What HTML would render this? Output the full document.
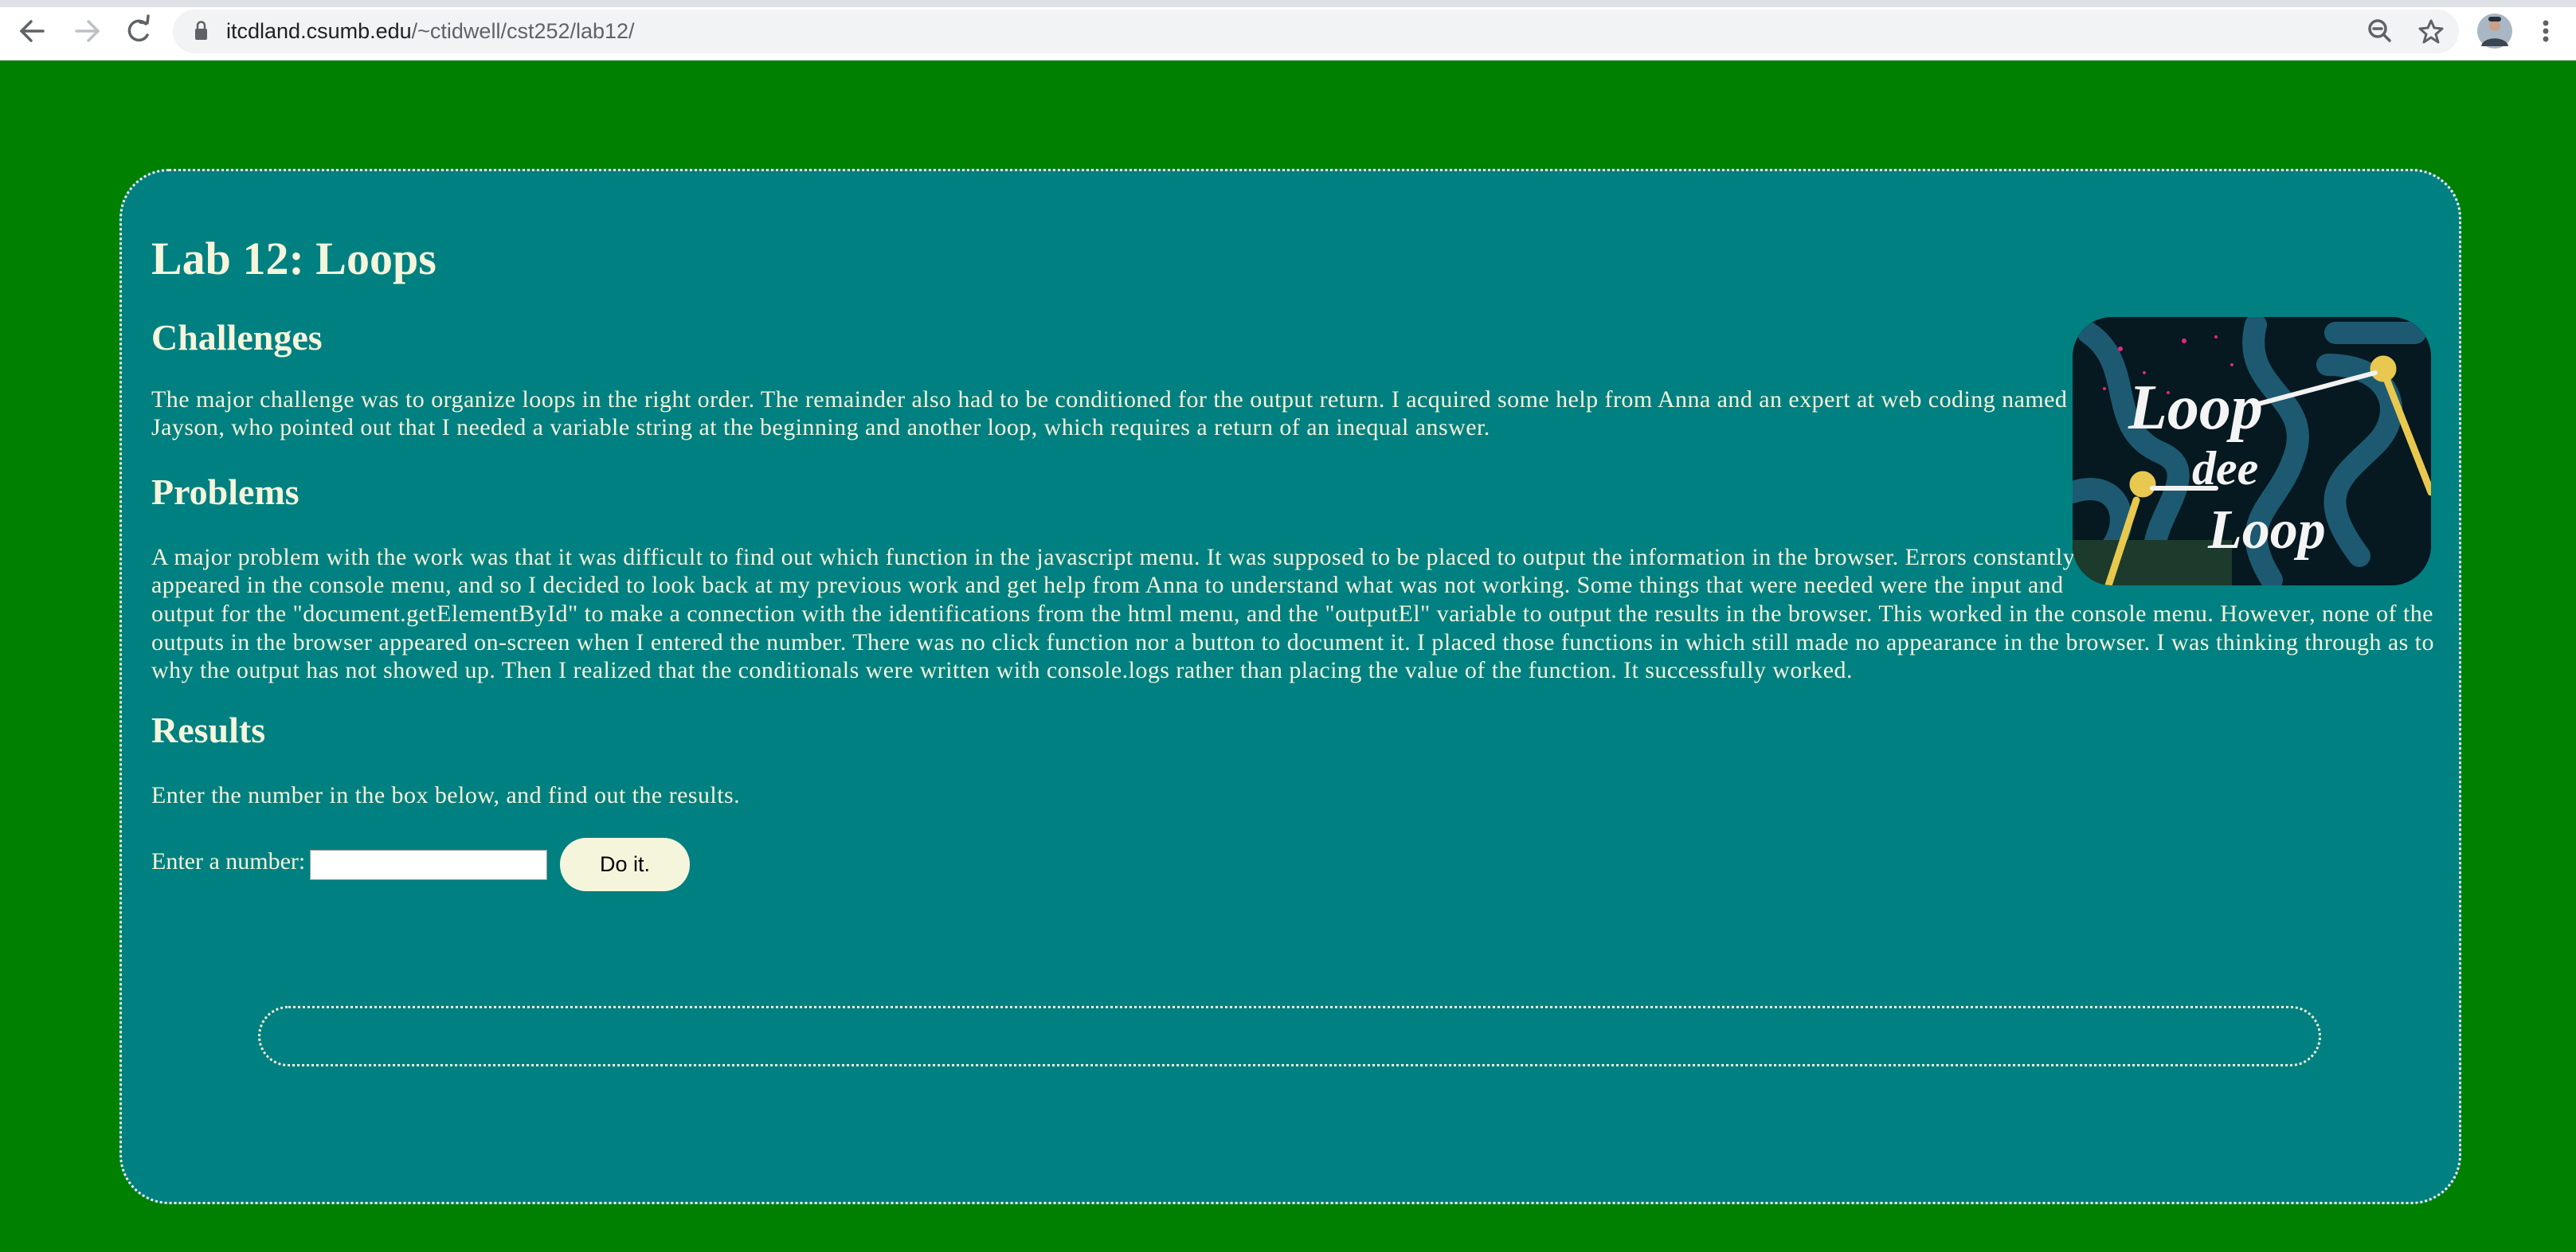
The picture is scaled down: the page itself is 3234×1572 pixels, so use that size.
<!DOCTYPE html>
<html><head><meta charset="utf-8"><style>
*{margin:0;padding:0;box-sizing:border-box}
html,body{width:3234px;height:1572px;overflow:hidden;background:#008000;font-family:"Liberation Serif",serif;color:#f5f5dc}
.strip{position:absolute;left:0;top:0;width:3234px;height:9px;background:#dee1e6}
.bar{position:absolute;left:0;top:9px;width:3234px;height:67px;background:#fff;border-bottom:1px solid #dadce0}
.omni{position:absolute;left:217px;top:12px;width:2870px;height:55px;border-radius:28px;background:#f1f3f4}
.url{position:absolute;left:284px;top:20px;font-family:"Liberation Sans",sans-serif;font-size:27px;color:#5f6368;line-height:38px;white-space:nowrap}
.url b{font-weight:normal;color:#202124}
.card{position:absolute;left:150px;top:212px;width:2940px;height:1300px;background:#008080;border:3px dotted #f5f5dc;border-radius:62px}
.t{position:absolute;left:190px;white-space:nowrap;line-height:1}
.h1{font-size:58px;font-weight:bold}
.h2{font-size:46px;font-weight:bold}
.p{font-size:30px;letter-spacing:0.45px}
.img{position:absolute;left:2602px;top:398px;width:450px;height:337px;border-radius:50px;overflow:hidden;background:#05161e}
.inp{position:absolute;left:389px;top:1067px;width:298px;height:38px;background:#fff;border:1px solid #999}
.btn{position:absolute;left:703px;top:1052px;width:163px;height:67px;border-radius:33px;background:#f5f5dc;color:#000;font-family:"Liberation Sans",sans-serif;font-size:27px;text-align:center;line-height:67px}
.box{position:absolute;left:324px;top:1263px;width:2590px;height:76px;border:3px dotted #f5f5dc;border-radius:38px}
</style></head><body>
<div class="strip"></div>
<div class="bar"></div>
<div class="omni"></div>
<svg style="position:absolute;left:0;top:0" width="3234" height="76">
<g fill="none" stroke="#5f6368" stroke-width="3.5" stroke-linecap="round">
<path d="M54 39H28M39 27L27 39L39 51"/>
<path d="M96 39H122M111 27L123 39L111 51" stroke="#bdc1c6"/>
<path d="M183 30A12 12 0 1 0 185 44"/><path d="M176 28L185 29L186 20" stroke-linejoin="round"/>
<circle cx="2985" cy="36" r="10"/><path d="M2980 36H2990M2992 43L3000 51"/>
<path d="M3052 26L3056 35L3066 36L3058 43L3061 53L3052 47L3043 53L3046 43L3038 36L3048 35Z" stroke-width="3" stroke-linejoin="round"/>
</g>
<rect x="245" y="36" width="15" height="14" rx="2" fill="#5f6368"/><path d="M248 36V32A4.5 4.5 0 0 1 257 32V36" fill="none" stroke="#5f6368" stroke-width="2.5"/>
<circle cx="3132" cy="39" r="22" fill="#a9b6c4"/><circle cx="3132" cy="32" r="7" fill="#c9a08a"/><path d="M3115 58C3117 45 3147 45 3149 58Z" fill="#3c4653"/><rect x="3124" y="21" width="16" height="6" rx="3" fill="#26303a"/>
<g fill="#5f6368"><circle cx="3196" cy="29" r="3.5"/><circle cx="3196" cy="39" r="3.5"/><circle cx="3196" cy="49" r="3.5"/></g>
</svg>
<div class="url"><b>itcdland.csumb.edu</b>/~ctidwell/cst252/lab12/</div>

<div class="card"></div>
<div class="t h1" style="top:296px">Lab 12: Loops</div>
<div class="t h2" style="top:401px">Challenges</div>
<div class="t p" style="top:487px">The major challenge was to organize loops in the right order. The remainder also had to be conditioned for the output return. I acquired some help from Anna and an expert at web coding named</div>
<div class="t p" style="top:522px">Jayson, who pointed out that I needed a variable string at the beginning and another loop, which requires a return of an inequal answer.</div>
<div class="t h2" style="top:595px">Problems</div>
<div class="t p" style="top:685px">A major problem with the work was that it was difficult to find out which function in the javascript menu. It was supposed to be placed to output the information in the browser. Errors constantly</div>
<div class="t p" style="top:720px">appeared in the console menu, and so I decided to look back at my previous work and get help from Anna to understand what was not working. Some things that were needed were the input and</div>
<div class="t p" style="top:756px">output for the "document.getElementById" to make a connection with the identifications from the html menu, and the "outputEl" variable to output the results in the browser. This worked in the console menu. However, none of the</div>
<div class="t p" style="top:792px">outputs in the browser appeared on-screen when I entered the number. There was no click function nor a button to document it. I placed those functions in which still made no appearance in the browser. I was thinking through as to</div>
<div class="t p" style="top:827px">why the output has not showed up. Then I realized that the conditionals were written with console.logs rather than placing the value of the function. It successfully worked.</div>
<div class="t h2" style="top:894px">Results</div>
<div class="t p" style="top:984px">Enter the number in the box below, and find out the results.</div>
<div class="t p" style="top:1067px;letter-spacing:0">Enter a number:</div>
<div class="inp"></div>
<div class="btn">Do it.</div>
<div class="box"></div>

<div class="img"><svg width="450" height="337" viewBox="0 0 450 337">
<rect width="450" height="337" fill="#061820"/>
<g fill="none" stroke="#1d5a72" stroke-width="28" stroke-linecap="round">
<path d="M20 20C80 60 40 140 110 170S60 280 120 330"/>
<path d="M230 10C210 90 300 100 280 170S200 250 250 330"/>
<path d="M330 20H430M320 60C400 60 420 120 380 160S300 220 360 300"/>
<path d="M0 220C60 200 80 260 40 300"/>
</g>
<g fill="#e0287a"><circle cx="60" cy="40" r="3"/><circle cx="90" cy="70" r="2"/><circle cx="140" cy="30" r="3"/><circle cx="200" cy="60" r="2"/><circle cx="40" cy="90" r="2"/><circle cx="180" cy="25" r="2"/><circle cx="120" cy="95" r="2"/></g>
<rect x="0" y="280" width="200" height="57" fill="#1d3b2c"/>
<g stroke="#e8c84e" stroke-width="9" stroke-linecap="round" fill="#e8c84e">
<path d="M395 80L450 220"/><path d="M80 230L45 337"/>
<circle cx="390" cy="65" r="12"/><circle cx="88" cy="210" r="12"/></g>
<g fill="none" stroke="#f2f2f2" stroke-width="6" stroke-linecap="round">
<path d="M380 70L230 110"/><path d="M100 215L180 215"/></g>
<g fill="#f4f4f4" font-family="Liberation Serif,serif" font-style="italic" font-weight="bold">
<text x="70" y="140" font-size="80">Loop</text>
<text x="150" y="210" font-size="60">dee</text>
<text x="170" y="290" font-size="70">Loop</text></g>
</svg></div>
</body></html>
